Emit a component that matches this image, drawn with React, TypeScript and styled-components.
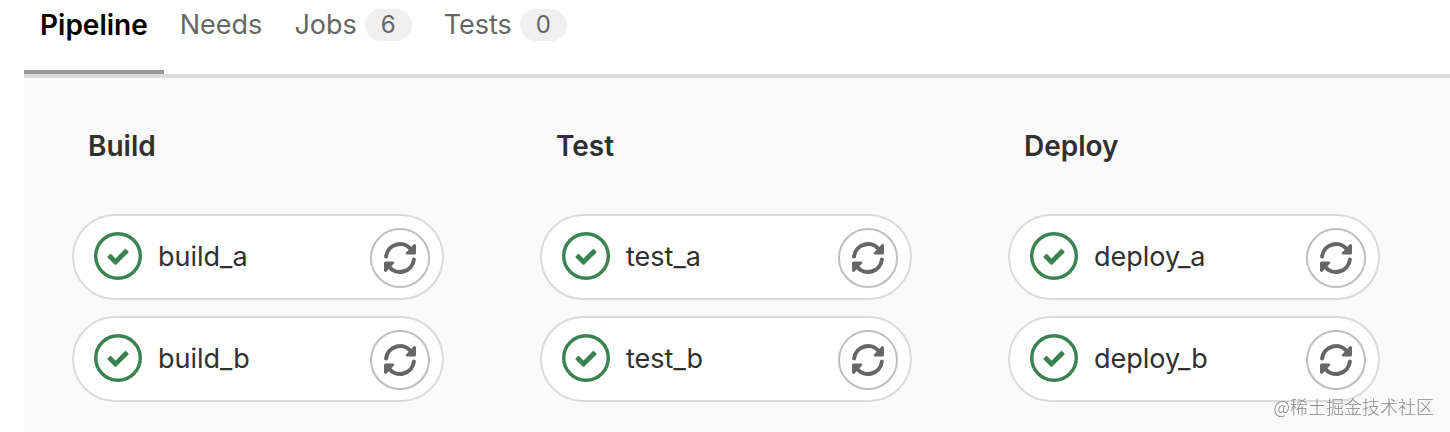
import React from "react";
import styled, { createGlobalStyle } from "styled-components";

const GlobalStyle = createGlobalStyle`
  *, *::before, *::after { box-sizing: border-box; }
  body {
    margin: 0;
    background: #fff;
    color: #303030;
    font-family: Inter, "Liberation Sans", sans-serif;
    font-size: 27px;
    line-height: 32px;
  }
`;

const Page = styled.div`
  padding-left: 24px;
`;

const Tabs = styled.nav`
  display: flex;
  border-bottom: 4px solid #dbdbdb;
`;

const Tab = styled.a<{ $active?: boolean }>`
  display: flex;
  align-items: center;
  gap: 8px;
  height: 74px;
  padding: 9px 16px 29px;
  border-bottom: 4px solid ${(p) => (p.$active ? "#999" : "transparent")};
  color: ${(p) => (p.$active ? "#000" : "#666")};
  font-size: ${(p) => (p.$active ? "28px" : "27px")};
  font-weight: ${(p) => (p.$active ? 600 : 400)};
  text-decoration: none;
`;

const Badge = styled.span`
  padding: 0 16px;
  border-radius: 16px;
  background: #f0f0f0;
  font-size: 24px;
`;

const Graph = styled.main`
  display: flex;
  gap: 96px;
  min-height: calc(100vh - 78px);
  padding: 52px 48px 30px;
  background: #fafafa;
  overflow: hidden;
`;

const Stage = styled.section`
  flex: 0 0 372px;
`;

const StageName = styled.h2`
  margin: 0 0 52px;
  padding-left: 16px;
  font-size: 28px;
  font-weight: 600;
  line-height: 32px;
`;

const JobList = styled.ul`
  display: grid;
  gap: 16px;
  margin: 0;
  padding: 0;
  list-style: none;
`;

const Job = styled.li`
  display: flex;
  align-items: center;
  height: 86px;
  padding: 0 12px 0 20px;
  border: 2px solid #dbdbdb;
  border-radius: 43px;
  background: #fff;
`;

const JobLink = styled.a`
  display: flex;
  flex: 1;
  align-items: center;
  gap: 16px;
  color: inherit;
  text-decoration: none;

  svg { margin-bottom: 2px; }
`;

const RetryButton = styled.button`
  display: grid;
  place-items: center;
  width: 60px;
  height: 60px;
  margin-top: 2px;
  padding: 0;
  border: 2px solid #bfbfbf;
  border-radius: 50%;
  background: #fff;
  color: #666;
`;

const Watermark = styled.small`
  position: fixed;
  right: 16px;
  bottom: 14px;
  color: #888;
  font-family: "Noto Sans CJK SC", sans-serif;
  font-size: 18px;
  font-weight: 300;
  line-height: 24px;
`;

const SuccessIcon = () => (
  <svg width="48" height="48" viewBox="0 0 14 14" aria-hidden="true">
    <circle cx="7" cy="7" r="6.5" fill="#fff" stroke="#3a8350" />
    <path
      fill="#3a8350"
      d="M6.278 7.697L5.045 6.464a.296.296 0 0 0-.42-.002l-.613.614a.298.298 0 0 0 .002.42l1.91 1.909a.5.5 0 0 0 .703.005l.265-.265L9.997 6.04a.291.291 0 0 0-.009-.408l-.614-.614a.29.29 0 0 0-.408-.009L6.278 7.697z"
    />
  </svg>
);

const RetryIcon = () => (
  <svg width="34" height="34" viewBox="0 0 34 34" aria-hidden="true">
    <g fill="none" stroke="currentColor" strokeWidth="4">
      <path strokeLinecap="round" d="M3.1 15.500A14 14 0 0 1 28.500 9" />
      <path strokeLinecap="round" d="M30.900 18.500A14 14 0 0 1 5.500 25" />
    </g>
    <path
      fill="currentColor"
      d="M33 4.500v7.500a1.500 1.500 0 0 1-1.500 1.500h-7.500a1.200 1.200 0 0 1-1-2l1.500-1.500 6-6.500a1.500 1.500 0 0 1 2.500 1zM1 29.500v-7.500a1.500 1.500 0 0 1 1.500-1.500h7.500a1.200 1.200 0 0 1 1 2l-1.500 1.500-6 6.500a1.500 1.500 0 0 1-2.500-1z"
    />
  </svg>
);

const stages = [
  { name: "Build", jobs: ["build_a", "build_b"] },
  { name: "Test", jobs: ["test_a", "test_b"] },
  { name: "Deploy", jobs: ["deploy_a", "deploy_b"] },
];

export default function App() {
  return (
    <Page>
      <GlobalStyle />
      <Tabs aria-label="Pipeline views">
        <Tab href="#pipeline" $active aria-current="page">Pipeline</Tab>
        <Tab href="#needs">Needs</Tab>
        <Tab href="#jobs">Jobs <Badge>6</Badge></Tab>
        <Tab href="#tests">Tests <Badge>0</Badge></Tab>
      </Tabs>
      <Graph>
        {stages.map((stage) => (
          <Stage key={stage.name}>
            <StageName>{stage.name}</StageName>
            <JobList>
              {stage.jobs.map((job) => (
                <Job key={job}>
                  <JobLink href={`#${job}`}>
                    <SuccessIcon />
                    {job}
                  </JobLink>
                  <RetryButton type="button" aria-label={`Retry ${job}`}>
                    <RetryIcon />
                  </RetryButton>
                </Job>
              ))}
            </JobList>
          </Stage>
        ))}
      </Graph>
      <Watermark>@稀土掘金技术社区</Watermark>
    </Page>
  );
}
